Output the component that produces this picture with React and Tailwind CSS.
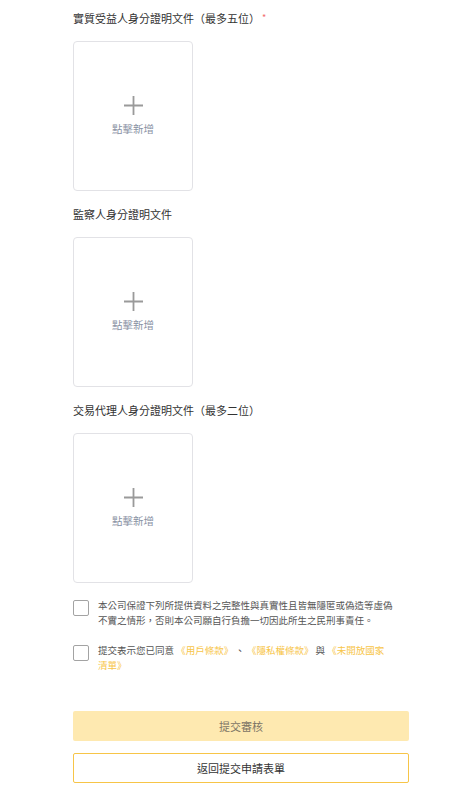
import React, { useState } from 'react';

const font = { fontFamily: '"Noto Sans CJK TC", "Noto Sans", sans-serif' };

const UploadBox = () => (
    <button className="w-[120px] h-[150px] border border-[#e2e2e6] rounded-[4px] bg-white flex flex-col items-center justify-center">
        <svg width="19" height="19" viewBox="0 0 19 19" className="block">
            <path d="M9.5 0v19M0 9.5h19" stroke="#9a9a9a" strokeWidth="1.8" />
        </svg>
        <span className="mt-[7px] text-[10.5px] leading-[14px] text-[#8891a3]">點擊新增</span>
    </button>
);

const Section = ({ title, required, first }) => (
    <div className={first ? '' : 'mt-[15px]'}>
        <div className="h-4 flex items-center text-[11px] leading-4 text-[#333]">
            <span>{title}</span>
            {required && <span className="ml-[2px] text-[9px] text-[#f26d6d]">*</span>}
        </div>
        <div className="mt-[15px]">
            <UploadBox />
        </div>
    </div>
);

const Check = ({ checked, onChange, children }) => (
    <label className="flex items-start gap-[9px] cursor-pointer">
        <span
            onClick={onChange}
            className={`mt-[1.5px] w-4 h-4 shrink-0 rounded-[2px] border-[1.5px] ${checked ? 'border-[#f5c342] bg-[#f5c342]' : 'border-[#a3a3a3] bg-white'}`}
        />
        <span className="w-[298px] text-[9.5px] leading-[15px] text-[#555]">{children}</span>
    </label>
);

const App = () => {
    const [agree1, setAgree1] = useState(false);
    const [agree2, setAgree2] = useState(false);

    return (
        <div className="w-[462px] min-h-[801px] bg-white" style={font}>
            <div className="w-[336px] ml-[73px] pt-[10px]">
                <Section title="實質受益人身分證明文件（最多五位）" required first />
                <Section title="監察人身分證明文件" />
                <Section title="交易代理人身分證明文件（最多二位）" />

                <div className="mt-[15px] flex flex-col gap-[15px]">
                    <Check checked={agree1} onChange={() => setAgree1(!agree1)}>
                        本公司保證下列所提供資料之完整性與真實性且皆無隱匿或偽造等虛偽不實之情形<span className="inline-block w-[1em]">，</span>否則本公司願自行負擔一切因此所生之民刑事責任。
                    </Check>
                    <Check checked={agree2} onChange={() => setAgree2(!agree2)}>
                        提交表示您已同意 <span className="text-[#f7c548]">《用戶條款》</span> 、 <span className="text-[#f7c548]">《隱私權條款》</span> 與 <span className="text-[#f7c548]">《未開放國家<br />清單》</span>
                    </Check>
                </div>

                <button className="mt-[38px] w-full h-[30px] rounded-[2px] bg-[#fee9b0] text-[11px] text-[#7d7566]">
                    提交審核
                </button>
                <button className="mt-3 w-full h-[30px] rounded-[2px] border border-[#f7c548] bg-white text-[11px] text-[#333]">
                    返回提交申請表單
                </button>
            </div>
        </div>
    );
};

export default App;
